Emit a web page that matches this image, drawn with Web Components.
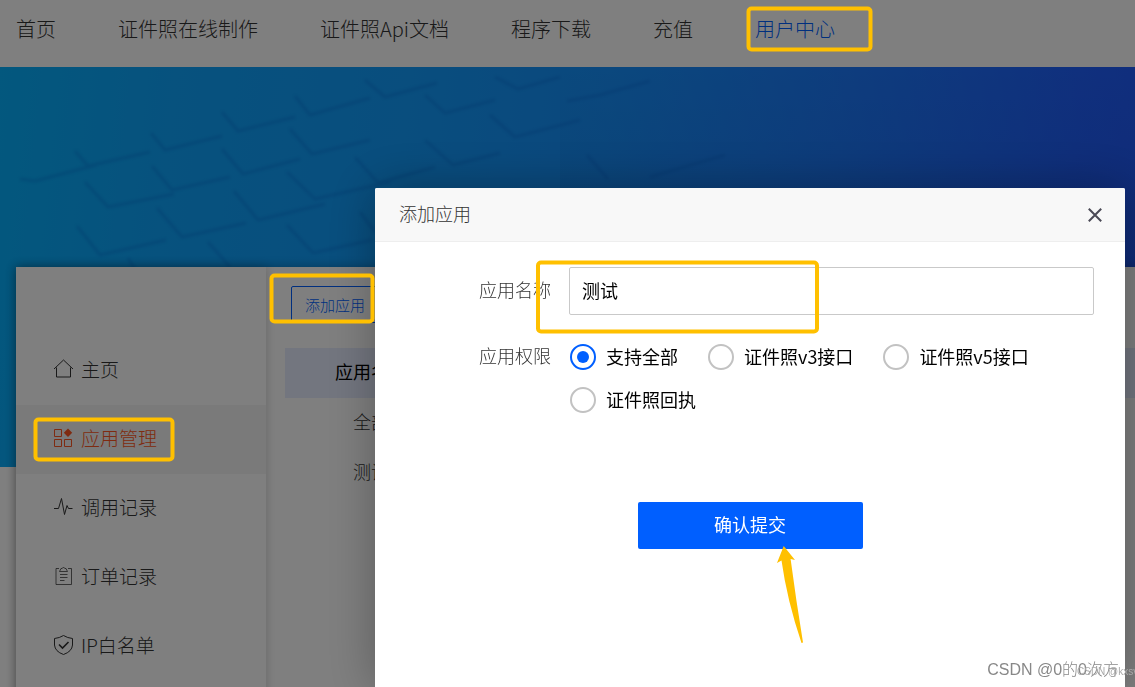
<!DOCTYPE html>
<html lang="zh-CN">
<head>
<meta charset="utf-8">
<title>用户中心</title>
<style>
  html, body { margin: 0; height: 100%; }
  body {
    overflow: hidden;
    background: #fff;
    color: #333;
    font: 300 18px/24px "Noto Sans CJK SC", sans-serif;
    --blue: #005fff;
    --orange: #ff5722;
    --mark: #ffc000;
  }
</style>
</head>
<body>
<user-center></user-center>
<modal-layer>
  <app-dialog heading="添加应用"><app-form></app-form></app-dialog>
</modal-layer>
<note-layer></note-layer>

<script>
const define = (name, html, setup) => {
  const template = document.createElement('template');
  template.innerHTML = html;
  customElements.define(name, class extends HTMLElement {
    connectedCallback() {
      if (this.shadowRoot) return;
      this.attachShadow({ mode: 'open' }).append(template.content.cloneNode(true));
      if (setup) setup(this, this.shadowRoot);
    }
  });
};

define('top-nav', `
<style>
  :host { display: block; background: #fff; }
  nav { display: flex; gap: 62px; height: 67px; padding: 0 16px; box-sizing: border-box; font-size: 20px; line-height: 57px; white-space: nowrap; }
  a { color: #333; text-decoration: none; }
  a[aria-current] { color: var(--blue); }
</style>
<nav>
  <a href="#home">首页</a><a href="#make">证件照在线制作</a><a href="#api">证件照Api文档</a>
  <a href="#download">程序下载</a><a href="#pay">充值</a><a href="#user" aria-current="page">用户中心</a>
</nav>`);

define('hero-banner', `
<style>
  :host { display: block; height: 400px; background: linear-gradient(96deg, #06b0fc 0%, #0ea4fc 15%, #129cfc 35%, #1690fc 52%, #1c7afc 72%, #2060fc 92%, #225afa 100%); }
  svg { display: block; width: 100%; height: 100%; }
</style>
<svg viewBox="0 0 1135 400" preserveAspectRatio="xMinYMin slice" aria-hidden="true">
  <defs>
    <filter id="soft"><feGaussianBlur stdDeviation="1.5"/></filter>
    <linearGradient id="deep" x1="0" y1="0" x2="0" y2="1"><stop offset="0" stop-color="#08287a" stop-opacity="0"/><stop offset="1" stop-color="#08287a" stop-opacity=".25"/></linearGradient>
  </defs>
  <rect x="560" width="575" height="200" fill="url(#deep)" opacity=".4"/>
  <g fill="none" stroke="#0458c8" stroke-width="3" opacity=".24" filter="url(#soft)" stroke-linejoin="round">
    <path d="M75 84 88 99 150 85M151 66 165 83 222 69M222 45 238 64 295 50M295 29 310 48 370 31M365 13 385 30 437 16M495 10 518 22 560 10"/>
    <path d="M20 112 35 114 96 98M85 115 108 140 174 127M152 99 172 123 230 110M222 82 243 107 300 92M290 62 312 87 370 73M425 73 453 98 500 86M425 28 445 46 495 33M567 34 600 28 650 14"/>
    <path d="M77 159 100 188 166 173M157 141 182 170 246 156M234 124 258 153 325 137M287 105 315 132 390 115M355 90 378 116 435 100M490 48 515 70 580 53"/>
    <path d="M128 191 135 202M208 175 230 200M287 158 313 186 372 173M360 145 375 165M587 88 608 112M650 110 725 88"/>
  </g>
</svg>`);

const icons = {
  home: '<path d="M1 11 10.500 2 20 11M3.500 9.500V19H17.500V9.500"/>',
  apps: '<path d="M1.500 2.500H8.500V9.500H1.500ZM1.500 12.500H8.500V19.500H1.500ZM11.500 12.500H18.500V19.500H11.500Z"/><path d="M15 1.500 19.200 5.700 15 9.900 10.800 5.700Z" fill="currentColor" stroke="none"/>',
  pulse: '<path d="M1 12.500H5.500L8.500 2.500 11.500 18.500 14 9.500 15.500 12.500H19.500"/>',
  order: '<path opacity=".75" d="M6 3.500H3V19.500H18.500V3.500H15M6.500 6.500 8 3.500H9.200Q10.500 .5 11.800 3.500H13L14.500 6.500ZM7 9.500H14.500M7 12.500H14.500M7 15.500H11.500"/>',
  shield: '<path d="M10.500 1.500Q14.500 4 19.500 4.500V11Q19 17.500 10.500 20.500 2 17.500 1.500 11V4.500Q6.500 4 10.500 1.500Z"/><path d="M6 10.500 9.500 14 15.500 8" stroke-width="1.600"/>'
};
define('side-item', `
<style>
  :host { display: block; }
  a { display: flex; align-items: center; gap: 7px; box-sizing: border-box; height: 69px; padding: 0 37px 4px; color: #333; font-size: 19px; text-decoration: none; white-space: nowrap; }
  svg { width: 21px; height: 21px; fill: none; stroke: currentColor; stroke-width: 1; flex: none; }
  :host([active]) a { color: var(--orange); background: #f4f4f4; }
</style>
<a><svg viewBox="0 0 21 21" aria-hidden="true"></svg><slot></slot></a>`, (host, root) => {
  root.querySelector('svg').innerHTML = icons[host.getAttribute('icon')];
  root.querySelector('a').href = '#' + host.getAttribute('icon');
});

define('side-menu', `
<style>
  :host { display: block; box-sizing: border-box; width: 250px; flex: none; padding-top: 69px; background: #fff; box-shadow: 0 0 10px rgba(0,0,0,.2); }
</style>
<side-item icon="home">主页</side-item>
<side-item icon="apps" active>应用管理</side-item>
<side-item icon="pulse">调用记录</side-item>
<side-item icon="order">订单记录</side-item>
<side-item icon="shield">IP白名单</side-item>`);

define('app-list', `
<style>
  :host { display: block; flex: 1; padding: 19px 0 19px 19px; }
  button { display: block; height: 37px; margin: 0 6px 25px; padding: 0 13px; border: 1px solid var(--blue); border-radius: 2px; background: none; color: var(--blue); font: inherit; font-size: 15px; }
  table { width: 100%; border-collapse: collapse; table-layout: fixed; }
  col:first-child { width: 172px; }
  th, td { box-sizing: border-box; height: 50px; padding: 0 0 4px; text-align: center; font-weight: inherit; }
  th { background: #e6ecfe; color: #000; font-weight: 400; }
</style>
<button type="button">添加应用</button>
<table>
  <colgroup><col><col></colgroup>
  <thead><tr><th>应用名称</th><th></th></tr></thead>
  <tbody><tr><td>全部</td><td></td></tr><tr><td>测试</td><td></td></tr></tbody>
</table>`);

define('user-center', `
<style>
  :host { display: block; }
  main { position: relative; display: flex; min-height: 440px; margin: -200px 0 0 16px; background: #fff; box-shadow: 0 0 10px rgba(0,0,0,.3); }
</style>
<top-nav></top-nav>
<hero-banner></hero-banner>
<main><side-menu></side-menu><app-list></app-list></main>`);

define('modal-layer', `
<style>
  :host { position: fixed; inset: 0; display: flex; justify-content: flex-end; box-sizing: border-box; padding: 188px 10px 0; background: rgba(0,0,0,.5); }
</style>
<slot></slot>`);

define('app-dialog', `
<style>
  :host { display: block; width: 750px; max-width: 100%; background: #fff; border-radius: 2px 2px 0 0; box-shadow: 1px 1px 50px rgba(0,0,0,.3); }
  header { display: flex; justify-content: space-between; align-items: center; height: 53px; padding: 0 23px 0 24px; border-bottom: 1px solid #eee; background: #f8f8f8; border-radius: 2px 2px 0 0; }
  h2 { margin: 0; padding-bottom: 4px; font: inherit; }
  button { display: flex; padding: 0; border: 0; background: none; color: #4a4955; }
  svg { width: 14px; height: 14px; stroke: currentColor; stroke-width: 2; }
</style>
<header>
  <h2></h2>
  <button type="button" aria-label="关闭"><svg viewBox="0 0 14 14" aria-hidden="true"><path d="M.8.8 13.200 13.200M13.200.8.8 13.200"/></svg></button>
</header>
<slot></slot>`, (host, root) => { root.querySelector('h2').textContent = host.getAttribute('heading'); });

define('app-form', `
<style>
  :host { display: block; }
  form { display: grid; grid-template-columns: 176px 1fr; column-gap: 18px; row-gap: 20px; padding: 25px 31px 25px 0; }
  .name { text-align: right; line-height: 44px; }
  #scope { line-height: 40px; }
  input[type=text] { box-sizing: border-box; width: 100%; height: 48px; padding: 0 12px 2px; border: 1px solid #c9c9c9; border-radius: 2px; background: #fff; color: #000; font: inherit; font-weight: 400; outline: 0; }
  .group { display: flex; flex-wrap: wrap; column-gap: 30px; padding-left: 1px; color: #000; font-weight: 400; }
  .group label { display: flex; align-items: center; gap: 10px; height: 43px; }
  .group span { padding-bottom: 2px; }
  input[type=radio] { appearance: none; display: grid; place-items: center; box-sizing: border-box; width: 26px; height: 26px; margin: 0; border: 2px solid #c2c2c2; border-radius: 50%; }
  input[type=radio]:checked { border-color: var(--blue); }
  input[type=radio]:checked::before { content: ""; width: 12px; height: 12px; border-radius: 50%; background: var(--blue); }
  .send { grid-column: 1 / -1; justify-self: center; width: 225px; height: 47px; margin: 61px 0 0 31px; padding: 0 0 4px; border: 0; border-radius: 2px; background: var(--blue); color: #fff; font: inherit; font-weight: 400; }
</style>
<form>
  <label class="name" for="name">应用名称</label>
  <input type="text" id="name" value="测试">
  <span class="name" id="scope">应用权限</span>
  <div class="group" role="radiogroup" aria-labelledby="scope">
    <label><input type="radio" name="scope" checked><span>支持全部</span></label>
    <label><input type="radio" name="scope"><span>证件照v3接口</span></label>
    <label><input type="radio" name="scope"><span>证件照v5接口</span></label>
    <label><input type="radio" name="scope"><span>证件照回执</span></label>
  </div>
  <button class="send" type="button">确认提交</button>
</form>`);

define('note-layer', `
<style>
  :host { position: fixed; inset: 0; overflow: hidden; pointer-events: none; }
  svg { position: absolute; left: 0; top: 0; width: 1135px; height: 687px; }
  .box { fill: none; stroke: var(--mark); stroke-width: 4; }
  .stamp { position: absolute; white-space: nowrap; font-family: "Liberation Sans", "Noto Sans CJK SC", sans-serif; font-weight: 300; }
  .large { right: 16px; bottom: 5px; color: #888; font-size: 16px; text-shadow: 0 0 1px #fff; }
  .small { left: 1077px; bottom: 3px; color: #aaa; font-size: 10px; }
</style>
<svg viewBox="0 0 1135 687" aria-hidden="true">
  <g class="box">
    <rect x="748.500" y="8.500" width="122" height="41" rx="3"/>
    <rect x="271.500" y="275.500" width="101" height="46" rx="3"/>
    <rect x="35.500" y="419.500" width="137" height="40" rx="3"/>
    <rect x="538" y="262.500" width="279" height="69" rx="3"/>
  </g>
  <path fill="#ffc000" d="M783.700 546 795 560 790.600 559Q796 600 803 642.500L801.500 643Q787 600 781.500 560.500L777 563Z"/>
</svg>
<span class="stamp large">CSDN @0的0次方</span>
<span class="stamp small">CSDN @kxsv</span>`);
</script>
</body>
</html>
